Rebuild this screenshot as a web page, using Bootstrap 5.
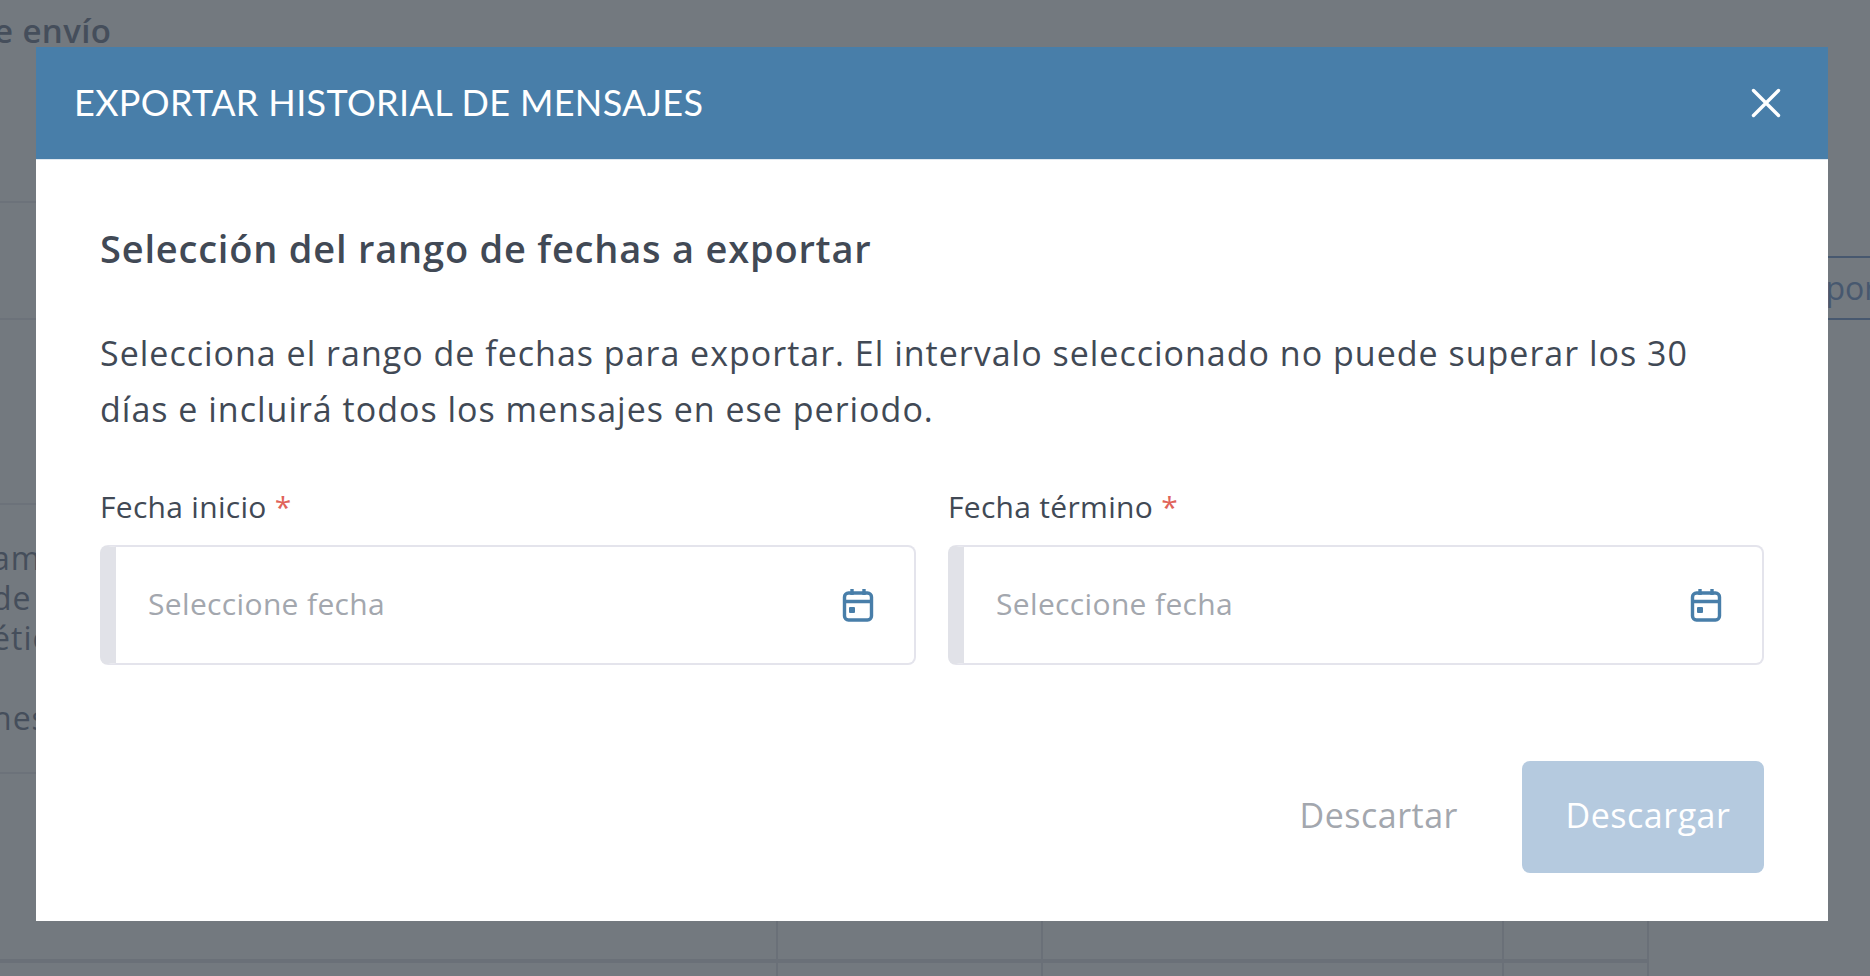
<!DOCTYPE html>
<html lang="es">
<head>
  <meta charset="UTF-8">
  <title>Exportar historial de mensajes</title>
  <meta name="viewport" content="width=device-width, initial-scale=1">
  <link rel="stylesheet" href="https://cdn.jsdelivr.net/npm/bootstrap@5.3.0/dist/css/bootstrap.min.css">
  <style>
    html, body { height: 976px; overflow: hidden; }
    body { background: #73797f; font-family: "Open Sans", "Liberation Sans", sans-serif; color: #414955; }

    /* page behind the modal */
    .behind { width: 1870px; height: 976px; overflow: hidden; color: #454e5b; }
    .behind-title { height: 203px; margin: 0 0 0 -6px; padding-top: 9px; font-size: 33px; letter-spacing: .4px; font-weight: 600; line-height: 44px; color: #454e5b; border-bottom: 2px solid #6c727a; }
    .behind-table { width: 1649px; flex: none; }
    .behind-row { border-bottom: 2px solid #6c727a; overflow: hidden; }
    .behind-row-a { height: 117px; }
    .behind-row-b { height: 185px; }
    .behind-row-c { height: 269px; padding-top: 33px; font-size: 32px; letter-spacing: 1px; line-height: 40px; margin-left: -8px; }
    .behind-row-c p { margin: 0; }
    .behind-cells { display: grid; grid-template-columns: 778px 265px 461px 145px; }
    .behind-cells > div { border-right: 2px solid #6a7078; }
    .behind-cells-a { border-bottom: 4px solid #6a7078; box-sizing: content-box; height: 185px; }
    .behind-cells-b { height: 20px; }
    .behind-side { margin-top: 256px; height: 64px; padding-left: 142px; overflow: hidden; flex: 1; }
    .behind-btn { width: 200px; height: 64px; border: solid #47586f; border-width: 2px 0; font-size: 32px; line-height: 60px; color: #47586f; white-space: nowrap; }

    /* modal */
    .export-modal { display: block; }
    .export-modal .modal-dialog { max-width: 1792px; width: 1792px; margin: 47px 0 0 36px; }
    .export-modal .modal-content { border: 0; border-radius: 0; height: 874px; }
    .export-modal .modal-header { height: 113px; padding: 0 47px 0 38px; background: #487ea9; border-bottom: 1px solid #dfe8f0; border-radius: 0; }
    .export-title { margin: 0; font-family: "Lato", "Liberation Sans", sans-serif; font-size: 36px; letter-spacing: .35px; font-weight: 400; color: #fff; }
    .export-close { padding: 0; border: 0; background: none; line-height: 0; }
    .export-modal .modal-body { padding: 50px 64px 0; flex: none; }
    .export-sub { margin: 0 0 39px; font-size: 38px; letter-spacing: .8px; line-height: 76px; font-weight: 600; color: #414955; }
    .export-text { margin: 0 0 48px; font-size: 34px; letter-spacing: 1px; line-height: 56px; color: #414955; }
    .export-grid { --bs-gutter-x: 32px; }
    .export-label { margin: 0 0 16px; font-size: 30px; letter-spacing: .3px; line-height: 44px; color: #414955; }
    .export-label span { color: #e0635a; }
    .export-field { height: 120px; border: 2px solid #e4e4ec; border-left: 16px solid #e1e2e8; border-radius: 8px; background: #fff; }
    .export-field .form-control { padding: 0 0 4px 32px; border: 0; font-size: 30px; letter-spacing: .35px; background: none; box-shadow: none; height: 100%; }
    .export-field .form-control::placeholder { color: #a3a7ae; }
    .export-cal { margin-right: 40px; flex: none; }
    .export-modal .modal-footer { padding: 0 64px; margin-top: 96px; border: 0; gap: 64px; }
    .export-modal .modal-footer > * { margin: 0; }
    .export-discard { padding: 0 0 3px; border: 0; font-size: 34px; letter-spacing: .5px; color: #a3a7ae; background: none; }
    .export-download { width: 242px; height: 112px; padding: 0 0 3px 10px; border: 0; border-radius: 8px; font-size: 34px; letter-spacing: .5px; color: #fff; background: #b5cadf; }
    .export-download:disabled { color: #fff; background: #b5cadf; opacity: 1; }
  </style>
</head>
<body>
  <div class="behind d-flex">
    <div class="behind-table">
      <h2 class="behind-title">e envío</h2>
      <div class="behind-row behind-row-a"></div>
      <div class="behind-row behind-row-b"></div>
      <div class="behind-row behind-row-c">
        <p>amo</p>
        <p>de</p>
        <p>ético</p>
        <p>&nbsp;</p>
        <p>nes</p>
      </div>
      <div class="behind-cells behind-cells-a"><div></div><div></div><div></div><div></div></div>
      <div class="behind-cells behind-cells-b"><div></div><div></div><div></div><div></div></div>
    </div>
    <div class="behind-side">
      <div class="behind-btn">Exportar</div>
    </div>
  </div>

  <div class="modal export-modal" tabindex="-1">
    <div class="modal-dialog">
      <div class="modal-content">
        <div class="modal-header">
          <h5 class="export-title">EXPORTAR HISTORIAL DE MENSAJES</h5>
          <button type="button" class="export-close" aria-label="Close">
            <svg width="30" height="30" viewBox="0 0 30 30"><path d="M2.5 2.5 27.5 27.5M27.5 2.5 2.5 27.5" stroke="#fff" stroke-width="3.4" stroke-linecap="round"/></svg>
          </button>
        </div>
        <div class="modal-body">
          <h4 class="export-sub">Selección del rango de fechas a exportar</h4>
          <p class="export-text">Selecciona el rango de fechas para exportar. El intervalo seleccionado no puede superar los 30 días e incluirá todos los mensajes en ese periodo.</p>
          <div class="row export-grid">
            <div class="col-6">
              <label class="form-label export-label">Fecha inicio <span>*</span></label>
              <div class="export-field d-flex align-items-center">
                <input type="text" class="form-control" placeholder="Seleccione fecha">
                <svg class="export-cal" width="32" height="34" viewBox="0 0 32 34" fill="none" stroke="#487ea9" stroke-width="3.4"><rect x="2.5" y="5" width="27" height="27" rx="4"/><path d="M2.5 13.5H29.5M10 1V7M22 1V7"/><rect x="7" y="19" width="6" height="6" rx="1" fill="#487ea9" stroke="none"/></svg>
              </div>
            </div>
            <div class="col-6">
              <label class="form-label export-label">Fecha término <span>*</span></label>
              <div class="export-field d-flex align-items-center">
                <input type="text" class="form-control" placeholder="Seleccione fecha">
                <svg class="export-cal" width="32" height="34" viewBox="0 0 32 34" fill="none" stroke="#487ea9" stroke-width="3.4"><rect x="2.5" y="5" width="27" height="27" rx="4"/><path d="M2.5 13.5H29.5M10 1V7M22 1V7"/><rect x="7" y="19" width="6" height="6" rx="1" fill="#487ea9" stroke="none"/></svg>
              </div>
            </div>
          </div>
        </div>
        <div class="modal-footer">
          <button type="button" class="btn export-discard">Descartar</button>
          <button type="button" class="btn export-download" disabled>Descargar</button>
        </div>
      </div>
    </div>
  </div>

  <script src="https://cdn.jsdelivr.net/npm/bootstrap@5.3.0/dist/js/bootstrap.bundle.min.js"></script>
</body>
</html>
